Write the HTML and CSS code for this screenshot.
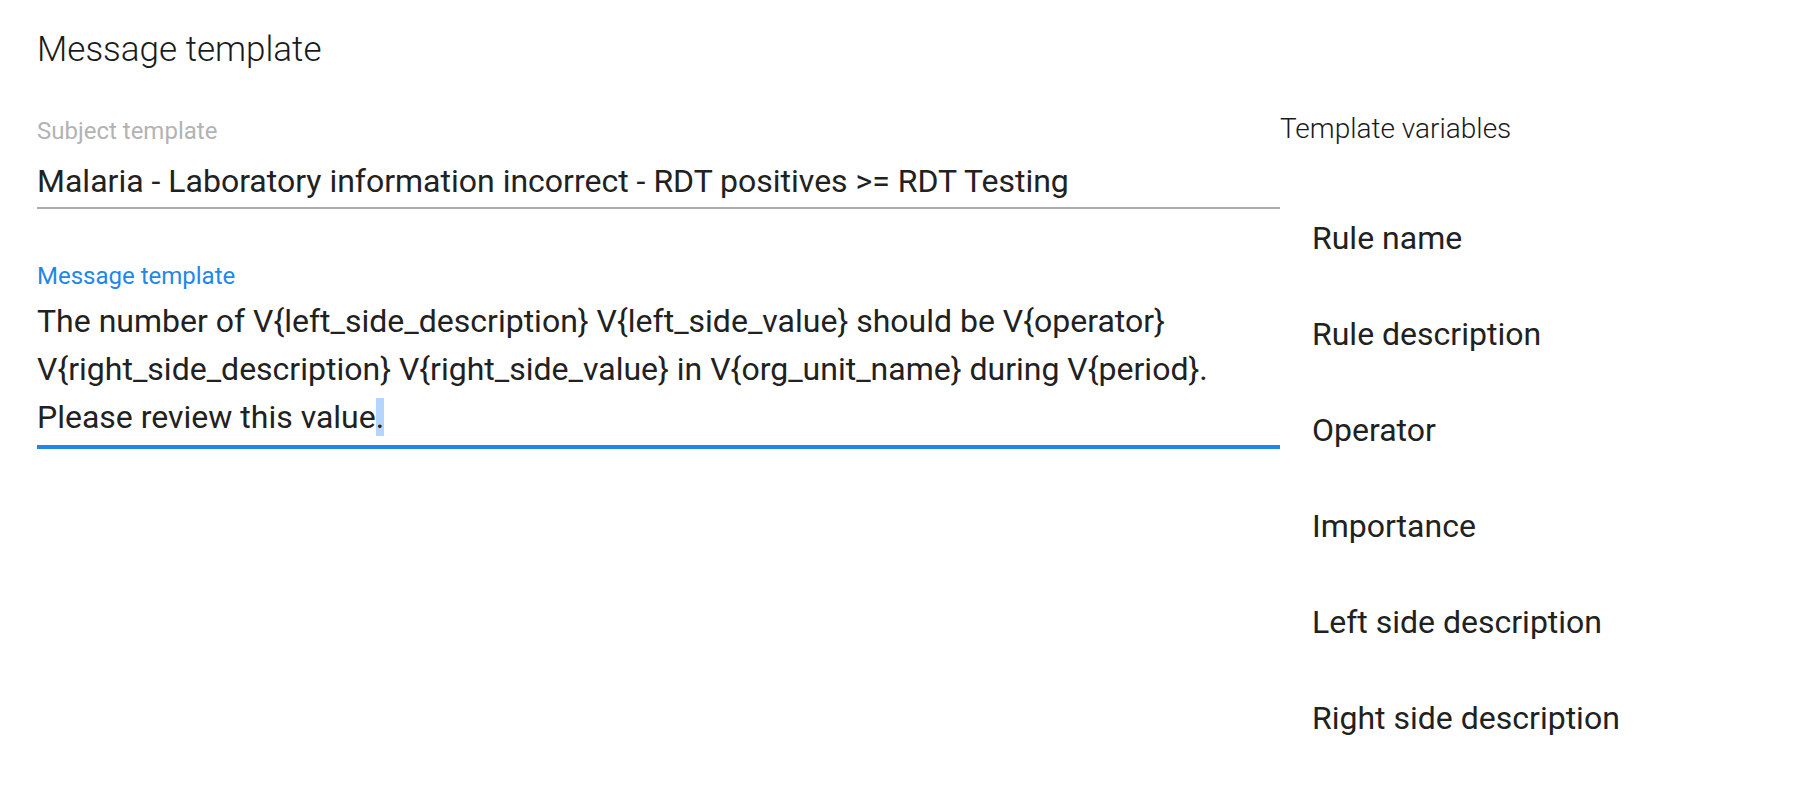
FILE: index.html
```html
<!DOCTYPE html>
<html lang="en">
<head>
<meta charset="utf-8">
<title>Message template</title>
<link rel="stylesheet" href="styles.css">
</head>
<body>
<div class="page">
  <h1 class="title">Message template</h1>
  <div class="columns">
    <div class="editor">
      <div class="field subject">
        <div class="label">Subject template</div>
        <div class="value">Malaria - Laboratory information incorrect - RDT positives &gt;= RDT Testing</div>
      </div>
      <div class="field message">
        <div class="label focused">Message template</div>
        <div class="value">The number of V{left_side_description} V{left_side_value} should be V{operator} V{right_side_description} V{right_side_value} in V{org_unit_name} during V{period}. Please review this value<span class="sel">.</span></div>
      </div>
    </div>
    <div class="vars">
      <h2 class="vars-title">Template variables</h2>
      <ul class="var-list">
        <li class="var-item">Rule name</li>
        <li class="var-item">Rule description</li>
        <li class="var-item">Operator</li>
        <li class="var-item">Importance</li>
        <li class="var-item">Left side description</li>
        <li class="var-item">Right side description</li>
      </ul>
    </div>
  </div>
</div>
</body>
</html>
```
FILE: styles.css
```css
html, body {
  margin: 0;
  padding: 0;
  background: #ffffff;
}

body {
  font-family: Roboto, "Noto Sans", "Liberation Sans", sans-serif;
  color: #212121;
}

.page {
  padding: 30px 0 0 37px;
}

.title {
  margin: 0 0 30px 0;
  font-size: 35px;
  font-weight: 300;
  line-height: 40px;
  color: #1a1a1a;
}

.columns {
  display: flex;
  align-items: flex-start;
}

.editor {
  width: 1243px;
  flex: none;
}

.field .label {
  font-size: 24px;
  line-height: 24px;
  color: #b3b3b3;
}

.field .label.focused {
  color: #1f87e8;
}

.field .value {
  font-size: 32px;
  line-height: 48px;
  color: #212121;
}

.subject {
  padding-top: 19px;
}

.subject .value {
  margin-top: 14px;
  padding-bottom: 2px;
  border-bottom: 2px solid #ababab;
}

.message {
  margin-top: 55px;
}

.message .value {
  margin-top: 9px;
  padding-bottom: 4px;
  border-bottom: 4px solid #1f87e8;
}

.sel {
  background: #b4d5fe;
}

.vars {
  flex: 1;
  padding-top: 13px;
}

.vars-title {
  margin: 0;
  font-size: 28px;
  font-weight: 300;
  line-height: 32px;
  color: #1a1a1a;
}

.var-list {
  list-style: none;
  margin: 45px 0 0 0;
  padding: 0 0 0 32px;
}

.var-item {
  font-size: 32px;
  line-height: 48px;
  padding: 24px 0;
  color: #212121;
}
```
